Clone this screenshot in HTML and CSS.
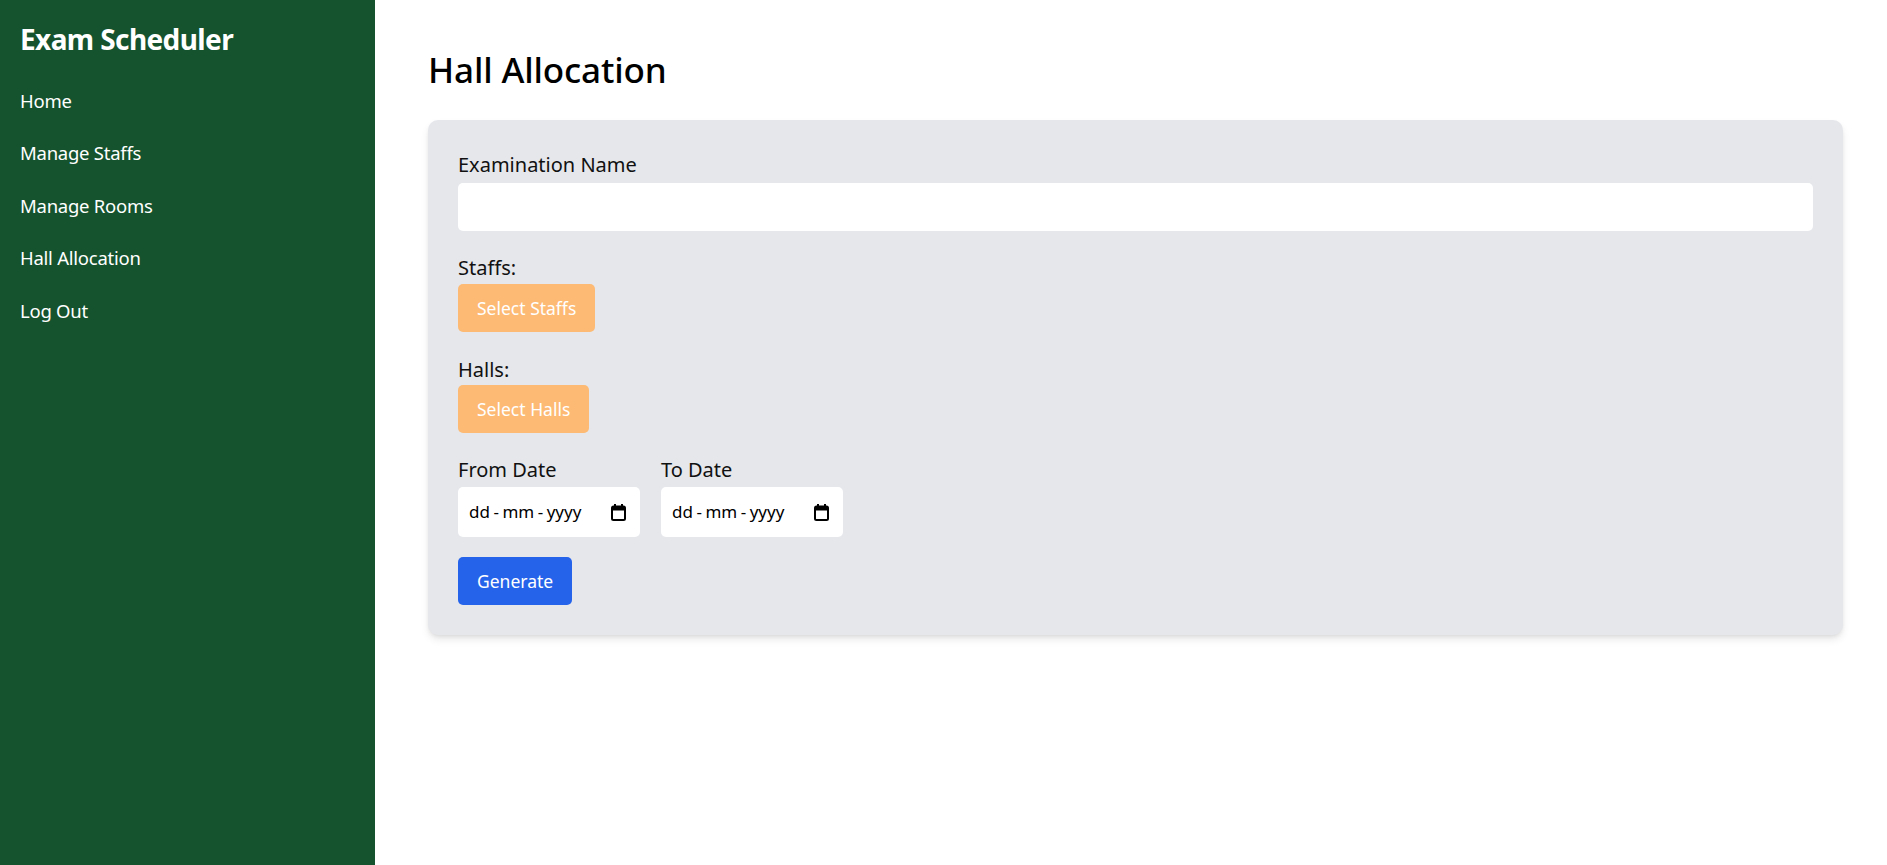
FILE: index.html
```html
<!DOCTYPE html>
<html lang="en">
<head>
<meta charset="utf-8">
<title>Hall Allocation</title>
<link rel="stylesheet" href="styles.css">
</head>
<body>
<div class="layout">
  <aside class="sidebar">
    <h1 class="brand">Exam Scheduler</h1>
    <nav class="nav">
      <a class="nav-link" href="#">Home</a>
      <a class="nav-link" href="#">Manage Staffs</a>
      <a class="nav-link" href="#">Manage Rooms</a>
      <a class="nav-link" href="#">Hall Allocation</a>
      <a class="nav-link" href="#">Log Out</a>
    </nav>
  </aside>
  <main class="main">
    <h2 class="page-title">Hall Allocation</h2>
    <form class="card">
      <div class="group">
        <label class="label label-name">Examination Name</label>
        <input class="text-input" type="text">
      </div>
      <div class="group group-staffs">
        <label class="label label-tight">Staffs:</label>
        <button type="button" class="btn btn-orange">Select Staffs</button>
      </div>
      <div class="group">
        <label class="label">Halls:</label>
        <button type="button" class="btn btn-orange">Select Halls</button>
      </div>
      <div class="group dates">
        <div class="date-field">
          <label class="label label-date">From Date</label>
          <div class="date-input" role="textbox" aria-label="From Date">
            <span class="date-text">dd<span class="sep">-</span>mm<span class="sep">-</span>yyyy</span>
            <svg class="cal-icon" width="15" height="17" viewBox="0 0 15 17" aria-hidden="true">
              <rect x="3" y="0" width="2" height="3.5" fill="#000"/>
              <rect x="10" y="0" width="2" height="3.5" fill="#000"/>
              <rect x="1" y="2.5" width="13" height="13.5" rx="1.5" fill="none" stroke="#000" stroke-width="2"/>
              <rect x="1" y="2.5" width="13" height="4" fill="#000"/>
            </svg>
          </div>
        </div>
        <div class="date-field">
          <label class="label label-date">To Date</label>
          <div class="date-input" role="textbox" aria-label="To Date">
            <span class="date-text">dd<span class="sep">-</span>mm<span class="sep">-</span>yyyy</span>
            <svg class="cal-icon" width="15" height="17" viewBox="0 0 15 17" aria-hidden="true">
              <rect x="3" y="0" width="2" height="3.5" fill="#000"/>
              <rect x="10" y="0" width="2" height="3.5" fill="#000"/>
              <rect x="1" y="2.5" width="13" height="13.5" rx="1.5" fill="none" stroke="#000" stroke-width="2"/>
              <rect x="1" y="2.5" width="13" height="4" fill="#000"/>
            </svg>
          </div>
        </div>
      </div>
      <button type="button" class="btn btn-blue">Generate</button>
    </form>
  </main>
</div>
</body>
</html>
```

FILE: styles.css
```css
* { box-sizing: border-box; }
html, body { margin: 0; padding: 0; height: 100%; }
body {
  font-family: "Noto Sans", "Open Sans", sans-serif;
  color: #111;
  background: #fff;
}
.layout {
  display: flex;
  min-height: 865px;
}
.sidebar {
  width: 375px;
  flex-shrink: 0;
  background: #15532e;
  color: #fff;
  padding: 20px;
}
.brand {
  margin: 0;
  font-size: 28px;
  line-height: 38px;
  font-weight: 700;
  letter-spacing: -0.6px;
}
.nav {
  display: flex;
  flex-direction: column;
  margin-top: 16.5px;
}
.nav-link {
  color: #fff;
  text-decoration: none;
  font-size: 18.5px;
  line-height: 30px;
  letter-spacing: -0.25px;
  padding: 11.25px 0;
}
.main {
  flex: 1;
  padding: 47px 44px 40px 53px;
}
.page-title {
  margin: 0 0 28px;
  font-size: 35px;
  line-height: 45px;
  font-weight: 500;
  letter-spacing: -0.15px;
  color: #000;
}
.card {
  background: #e5e7eb;
  border-radius: 10px;
  padding: 30px;
  box-shadow: 0 5px 8px -1px rgba(0,0,0,0.1), 0 2px 5px -2px rgba(0,0,0,0.1);
}
.group {
  margin-bottom: 22px;
}
.group-staffs { margin-bottom: 23px; }
.label {
  display: block;
  font-size: 20px;
  line-height: 30px;
  color: #111;
}
.label-name { margin-bottom: 3px; }
.label-tight { margin-bottom: 1px; }
.label-date { margin-bottom: 2px; }
.text-input {
  display: block;
  width: 100%;
  height: 48px;
  border: none;
  border-radius: 5px;
  background: #fff;
  font: inherit;
  padding: 0 12px;
}
.btn {
  display: inline-block;
  border: none;
  border-radius: 5px;
  height: 48px;
  padding: 0 19px;
  font-family: inherit;
  font-size: 17.5px;
  color: #fff;
  cursor: pointer;
}
.btn-orange { background: #fdba74; }
.btn-blue { background: #2563eb; }
.dates {
  display: flex;
  gap: 21px;
  margin-bottom: 20px;
}
.date-input {
  display: flex;
  align-items: center;
  justify-content: space-between;
  width: 182px;
  height: 50px;
  border-radius: 5px;
  background: #fff;
  padding: 0 14px 0 11px;
  color: #000;
}
.date-text {
  font-size: 17px;
  line-height: 20px;
}
.sep {
  margin: 0 3.5px;
}
.cal-icon {
  display: block;
  flex-shrink: 0;
}
```
